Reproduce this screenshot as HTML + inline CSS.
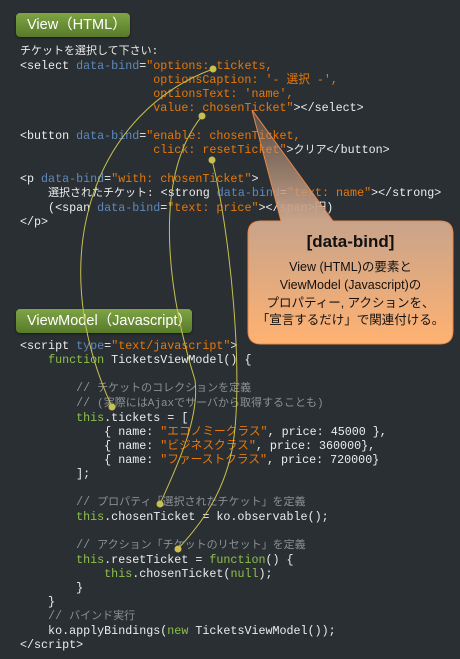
<!DOCTYPE html>
<html><head><meta charset="utf-8"><style>
html,body{margin:0;padding:0;}
body{width:460px;height:659px;background:#2a2f33;position:relative;overflow:hidden;font-family:"Liberation Sans","Noto Sans CJK JP",sans-serif;}
pre{position:absolute;left:20px;margin:0;font-family:"Liberation Mono","Noto Sans CJK JP",monospace;font-size:11.7px;line-height:14px;color:#ececec;}
.a{color:#5f88bc}.s{color:#e8780a}.k{color:#8cc04a}.c{color:#8a9094}
.j{font-size:11px;}
.lab{position:absolute;left:16px;height:24px;border-radius:4px;background:linear-gradient(#7ea444,#587a2a);color:#fff;font-size:14.5px;line-height:24px;padding-left:11px;box-sizing:border-box;box-shadow:0 1px 2px rgba(0,0,0,.5);}
.call{position:absolute;left:248px;top:221px;width:205px;text-align:center;color:#111;}
</style></head><body>
<div class="lab" style="top:13px;width:114px">View（HTML）</div>
<div class="lab" style="top:309px;width:176px">ViewModel（Javascript）</div>
<pre style="top:44px"><span class="j">チケットを選択して下さい:</span>
&lt;select <span class="a">data-bind</span>=<span class="s">"options: tickets,</span>
<span class="s">                   optionsCaption: '- 選択 -',</span>
<span class="s">                   optionsText: 'name',</span>
<span class="s">                   value: chosenTicket"</span>&gt;&lt;/select&gt;

&lt;button <span class="a">data-bind</span>=<span class="s">"enable: chosenTicket,</span>
<span class="s">                   click: resetTicket"</span>&gt;<span class="j">クリア</span>&lt;/button&gt;

&lt;p <span class="a">data-bind</span>=<span class="s">"with: chosenTicket"</span>&gt;
    <span class="j">選択されたチケット:</span> &lt;strong <span class="a">data-bind</span>=<span class="s">"text: name"</span>&gt;&lt;/strong&gt;
    (&lt;span <span class="a">data-bind</span>=<span class="s">"text: price"</span>&gt;&lt;/span&gt;円)
&lt;/p&gt;</pre>
<pre style="top:339px">&lt;script <span class="a">type</span>=<span class="s">"text/javascript"</span>&gt;
    <span class="k">function</span> TicketsViewModel() {

        <span class="c">// <span class="j">チケットのコレクションを定義</span></span>
        <span class="c">// <span class="j">(実際にはAjaxでサーバから取得することも)</span></span>
        <span class="k">this</span>.tickets = [
            { name: <span class="s">"エコノミークラス"</span>, price: 45000 },
            { name: <span class="s">"ビジネスクラス"</span>, price: 360000},
            { name: <span class="s">"ファーストクラス"</span>, price: 720000}
        ];

        <span class="c">// <span class="j">プロパティ「選択されたチケット」を定義</span></span>
        <span class="k">this</span>.chosenTicket = ko.observable();

        <span class="c">// <span class="j">アクション「チケットのリセット」を定義</span></span>
        <span class="k">this</span>.resetTicket = <span class="k">function</span>() {
            <span class="k">this</span>.chosenTicket(<span class="k">null</span>);
        }
    }
    <span class="c">// <span class="j">バインド実行</span></span>
    ko.applyBindings(<span class="k">new</span> TicketsViewModel());
&lt;/script&gt;</pre>
<svg width="460" height="659" style="position:absolute;left:0;top:0">
<defs><linearGradient id="g" x1="0" y1="110" x2="0" y2="344" gradientUnits="userSpaceOnUse">
<stop offset="0" stop-color="#b08870" stop-opacity="0.35"/><stop offset="0.47" stop-color="#c8a38a"/><stop offset="1" stop-color="#ffb272"/></linearGradient></defs>
<path d="M252,110 L333,221 L440,221 Q453,221 453,234 L453,331 Q453,344 440,344 L261,344 Q248,344 248,331 L248,234 Q248,221 261,221 L281,221 Z" fill="url(#g)" stroke="#e8884a" stroke-width="1"/>
<g fill="none" stroke="#c8c050" stroke-width="1">
<path d="M213,69 C100,110 40,250 112,407"/>
<path d="M202,116 C150,180 170,300 195,380 C200,420 175,470 160,504"/>
<path d="M212,160 C230,230 245,380 232,450 C222,500 195,530 178,549"/>
</g>
<g fill="#c8c050">
<circle cx="213" cy="69" r="3.5"/><circle cx="112" cy="407" r="3.5"/>
<circle cx="202" cy="116" r="3.5"/><circle cx="160" cy="504" r="3.5"/>
<circle cx="212" cy="160" r="3.5"/><circle cx="178" cy="549" r="3.5"/>
</g>
</svg>
<div class="call" style="top:232px;font-size:17px;font-weight:bold;">[data-bind]</div>
<div class="call" style="top:259px;font-size:12.5px;line-height:17.8px;">View (HTML)の要素と<br>ViewModel (Javascript)の<br>プロパティー, アクションを、<br>「宣言するだけ」で関連付ける。</div>
</body></html>
